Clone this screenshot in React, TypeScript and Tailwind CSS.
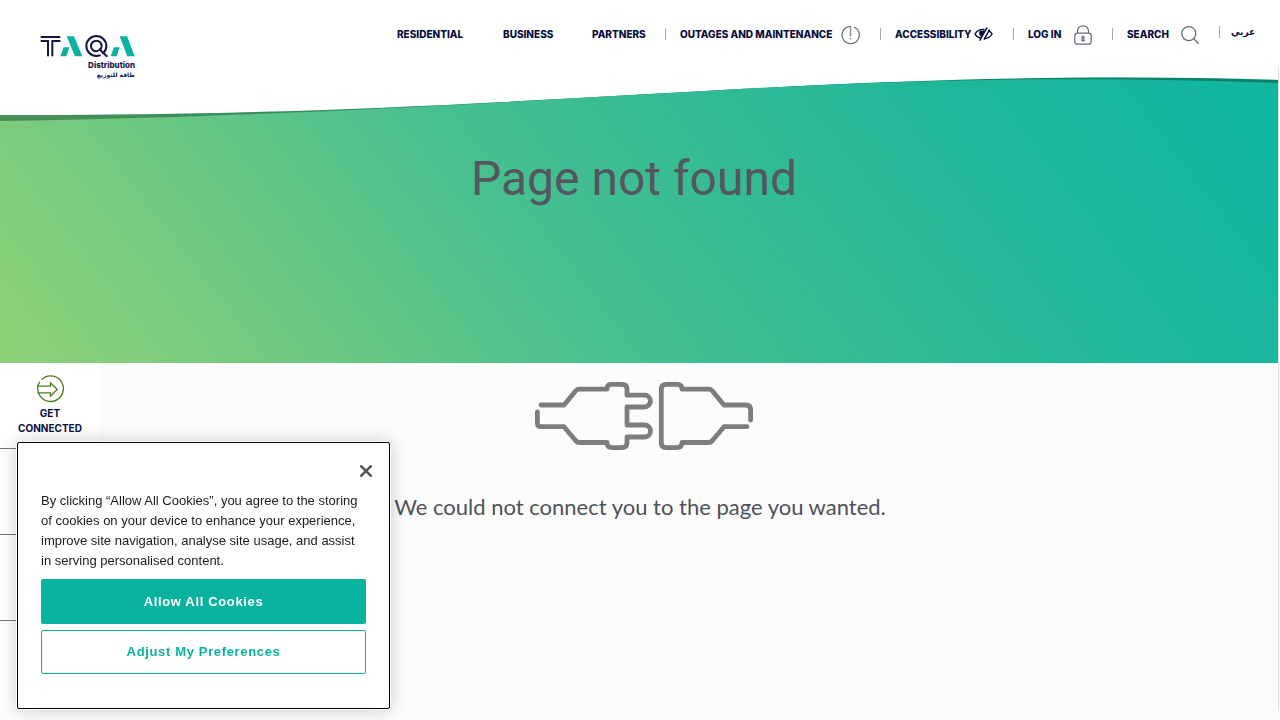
import type { ReactNode } from "react";

function Logo() {
  return (
    <a href="#home" aria-label="TAQA Distribution" className="mt-[35px] flex w-[95px] flex-col items-end text-[#14164a]">
      <svg viewBox="62 45 283 72" className="h-6 w-[95px]" fill="none" aria-hidden="true">
        <g stroke="#14164a" strokeWidth="6">
          <path d="M63 51H122" />
          <path d="M63 63H85V109" />
          <path d="M122 63H98V109" />
          <circle cx="230" cy="78" r="30" />
          <circle cx="230" cy="78" r="16" />
          <path d="M236 94L252 110" stroke="#fff" strokeWidth="7" />
          <path d="M238 86L263 110" />
        </g>
        <g fill="#0ab2a0">
          <path d="M122 109L132 82H149L140 109Z" />
          <path d="M141 49H163L188 109H166Z" />
          <path d="M273 109L283 82H300L291 109Z" />
          <path d="M300 49H322L345 109H323Z" />
        </g>
      </svg>
      <span className="text-[8px] leading-3 font-extrabold">Distribution</span>
      <span lang="ar" dir="rtl" className="font-['DejaVu_Sans',sans-serif] text-[6px] leading-2 font-bold">طاقة للتوزيع</span>
    </a>
  );
}

function OutageIcon() {
  return (
    <svg viewBox="0 0 20 20" className="mt-0.5 size-5" fill="none" stroke="#666b78" strokeWidth="1.2" aria-hidden="true">
      <path d="M7.8 1.900A8.600 8.600 0 1 0 13.800 2" />
      <path d="M10.500 1V11.500M10.500 13V14.500" strokeWidth="1.500" stroke="#8b8f99" />
      <path d="M7.500 2L10.500 1.300" />
    </svg>
  );
}

function EyeIcon() {
  return (
    <svg viewBox="0 0 20 16" className="h-4 w-[19px]" fill="none" stroke="#060b42" strokeWidth="1.5" aria-hidden="true">
      <path d="M7.5 12.7C4.5 12 2 9.8 1 8C3 4.5 6.5 2.7 11 3.2M15 4.2C17 5.3 18.3 6.7 19 8C17.5 10.6 14.5 12.6 11 12.8" />
      <path d="M13.8 1L6 15M16.5 3.5L10.5 14" />
      <path d="M6.2 4.4H12L7.8 11.5C5.2 9.8 4.8 6.8 6.2 4.4Z" fill="#060b42" stroke="none" />
    </svg>
  );
}

function LockIcon() {
  return (
    <svg viewBox="0 0 18 20" className="mt-0.5 h-5 w-[18px]" fill="none" stroke="#666b78" strokeWidth="1.2" aria-hidden="true">
      <path d="M3.5 8V6.2C3.5 3 5.8 .8 9 .8S14.5 3 14.5 6.2V8" />
      <path d="M3.5 8.2H14.5C16.2 8.2 17.2 9.2 17.2 10.8V16.4C17.2 18.2 16.2 19.2 14.5 19.2H3.5C1.8 19.2 .8 18.2 .8 16.4V10.8C.8 9.2 1.8 8.2 3.5 8.2Z" />
      <circle cx="9" cy="12.3" r="1.1" />
      <path d="M8.300 13.400L7.800 15.600H10.200L9.700 13.400" />
    </svg>
  );
}

function SearchIcon() {
  return (
    <svg viewBox="0 0 18 20" className="mt-0.5 h-5 w-[18px]" fill="none" stroke="#666b78" strokeWidth="1.3" aria-hidden="true">
      <circle cx="7.8" cy="8.6" r="7" />
      <path d="M12.8 13.6L17.5 18.8" />
    </svg>
  );
}

function Tool({ label, icon, width }: { label: string; icon: ReactNode; width: string }) {
  return (
    <li className={`flex items-center ${width}`}>
      <span className="h-3 w-px bg-[#aaa]" />
      <a href={`#${label.toLowerCase().replaceAll(" ", "-")}`} className="flex flex-1 items-center justify-between pr-5 pl-[14px]">
        {label}
        {icon}
      </a>
    </li>
  );
}

function Header() {
  return (
    <header className="relative z-10 flex h-[67px] items-start justify-between pl-10">
      <Logo />
      <nav aria-label="Main" className="pt-6 text-[10px] font-extrabold whitespace-nowrap text-[#060b42]">
        <ul className="flex h-5 items-center">
          <li className="w-[106px]"><a href="#residential">RESIDENTIAL</a></li>
          <li className="w-[89px]"><a href="#business">BUSINESS</a></li>
          <li className="w-[73px]"><a href="#partners">PARTNERS</a></li>
          <Tool label="OUTAGES AND MAINTENANCE" icon={<OutageIcon />} width="w-[215px]" />
          <Tool label="ACCESSIBILITY" icon={<EyeIcon />} width="w-[133px]" />
          <Tool label="LOG IN" icon={<LockIcon />} width="w-[99px]" />
          <Tool label="SEARCH" icon={<SearchIcon />} width="w-[107px]" />
          <li className="flex w-[61px] items-center gap-[11px] pb-1">
            <span className="h-3 w-px bg-[#aaa]" />
            <a href="#ar" lang="ar" className="font-['DejaVu_Sans',sans-serif] text-[9px] leading-4 font-bold">عربي</a>
          </li>
        </ul>
      </nav>
    </header>
  );
}

function Hero() {
  return (
    <section className="relative h-[296px]">
      <svg viewBox="0 67 1278 296" preserveAspectRatio="none" className="absolute inset-0 size-full" aria-hidden="true">
        <defs>
          <linearGradient id="sweep" gradientUnits="userSpaceOnUse" x1="50" y1="370" x2="918" y2="-300">
            <stop offset="0" stopColor="#8ad079" />
            <stop offset=".12" stopColor="#7acb7d" />
            <stop offset=".4" stopColor="#4ac08e" />
            <stop offset=".6" stopColor="#34bb95" />
            <stop offset=".8" stopColor="#1fb79a" />
            <stop offset="1" stopColor="#12b5a0" />
          </linearGradient>
        </defs>
        <path d="M0 115C300 116 500 102 780 87C960 78 1120 75 1278 80V95H700L300 130H0Z" fill="url(#sweep)" />
        <path d="M0 115C300 116 500 102 780 87C960 78 1120 75 1278 80V95H700L300 130H0Z" fill="#00361e" fillOpacity=".4" />
        <path d="M0 121C300 116 500 102 780 87C960 78 1120 77 1278 83V363H0Z" fill="url(#sweep)" />
      </svg>
      <h1 className="relative pt-20 pr-[10px] text-center font-['Roboto',sans-serif] text-5xl leading-[64px] text-[#54575f]">Page not found</h1>
    </section>
  );
}

function Sidebar() {
  return (
    <aside className="h-[343px] w-[100px] shrink-0 bg-white">
      <ul>
        <li className="h-[86px] border-b border-[#777]">
          <a href="#get-connected" className="flex flex-col items-center pt-3 text-center text-[10px] leading-[15px] font-bold text-[#060b42]">
            <svg viewBox="0 0 28 28" className="mb-[3px] size-7" fill="none" stroke="#4b7d1a" strokeWidth="1.3" aria-hidden="true">
              <path d="M5.6 4.500A12.8 12.8 0 1 1 3.8 6.7" />
              <path d="M1.3 11.2H14.5V7.9L21.2 14.500L14.5 21.1V17.8H1.6" />
            </svg>
            <span>GET<br />CONNECTED</span>
          </a>
        </li>
        <li className="h-[86px] border-b border-[#777]" />
        <li className="h-[86px] border-b border-[#777]" />
      </ul>
    </aside>
  );
}

function PlugIcon() {
  return (
    <svg viewBox="0 0 218 68" className="h-[68px] w-[218px]" fill="none" stroke="#7d7d7d" strokeWidth="4.8" strokeLinecap="round" strokeLinejoin="round" aria-hidden="true">
      <path d="M6 23H29L41 8.5Q42.500 7.200 44 7.200H72V6Q72.500 2.400 76 2.400H87Q92 2.400 92 7V13.200H109.500A5.900 5.900 0 0 1 109.500 25H92V43H109.500A5.900 5.900 0 0 1 109.500 55H92V61Q92 65.600 87 65.600H77Q72.500 65.600 72 61.500V60.500H44Q42.500 60.500 41 59L29 44.700H6Q2.400 44.700 2.400 41V30" />
      <path d="M212 44.700H189L177 59Q175.500 60.500 174 60.500H147V61.500Q146.500 65.600 142 65.600H131Q126.300 65.600 126.300 61V7Q126.300 2.400 131 2.400H142Q146.500 2.400 147 6V7.200H174Q175.500 7.200 177 8.500L189 23H211Q215.600 23 215.600 28V38" />
    </svg>
  );
}

function CookieDialog() {
  return (
    <section role="dialog" aria-label="Cookie consent" className="fixed bottom-[10px] left-4 z-20 w-[375px] rounded-sm bg-white p-px font-['Liberation_Sans',Arial,sans-serif] shadow-[0_0_18px_rgba(0,0,0,0.2)]">
      <div className="flex flex-col rounded-xs border border-black px-[23px] pt-5 pb-[34px]">
        <button type="button" aria-label="Close" className="-mr-4 flex h-4 w-8 items-center justify-center self-end">
          <svg viewBox="0 0 12 12" className="size-3" stroke="#565656" strokeWidth="2.6" strokeLinecap="round" aria-hidden="true">
            <path d="M1.300 1.300L10.700 10.700M10.700 1.300L1.300 10.700" />
          </svg>
        </button>
        <p className="mt-3 text-[13px] leading-5 text-[#1b1b1b]">
          By clicking “Allow All Cookies”, you agree to the storing of cookies on your device to enhance your experience, improve site navigation, analyse site usage, and assist in serving personalised content.
        </p>
        <button type="button" className="mt-2 h-[45px] rounded-xs bg-[#0ab2a0] text-[13px] font-bold tracking-wider text-white">Allow All Cookies</button>
        <button type="button" className="mt-[6px] h-11 rounded-xs border border-[#0ab2a0] text-[13px] font-bold tracking-wider text-[#0ab2a0]">Adjust My Preferences</button>
      </div>
    </section>
  );
}

export default function App() {
  return (
    <div className="min-h-screen bg-[#fcfcfc] font-['Inter',sans-serif]">
      <div className="bg-white">
        <Header />
        <div className="mr-px border-r border-[#ddd]">
          <Hero />
        </div>
      </div>
      <div className="mr-px flex h-[347px] border-r border-[#ddd]">
        <Sidebar />
        <main className="flex flex-1 flex-col items-center pt-[19px] pr-[90px]">
          <PlugIcon />
          <p className="mt-[39px] pr-2 font-['Lato',sans-serif] text-[22px] leading-9 whitespace-nowrap text-[#4f5159]">We could not connect you to the page you wanted.</p>
        </main>
      </div>
      <CookieDialog />
    </div>
  );
}
